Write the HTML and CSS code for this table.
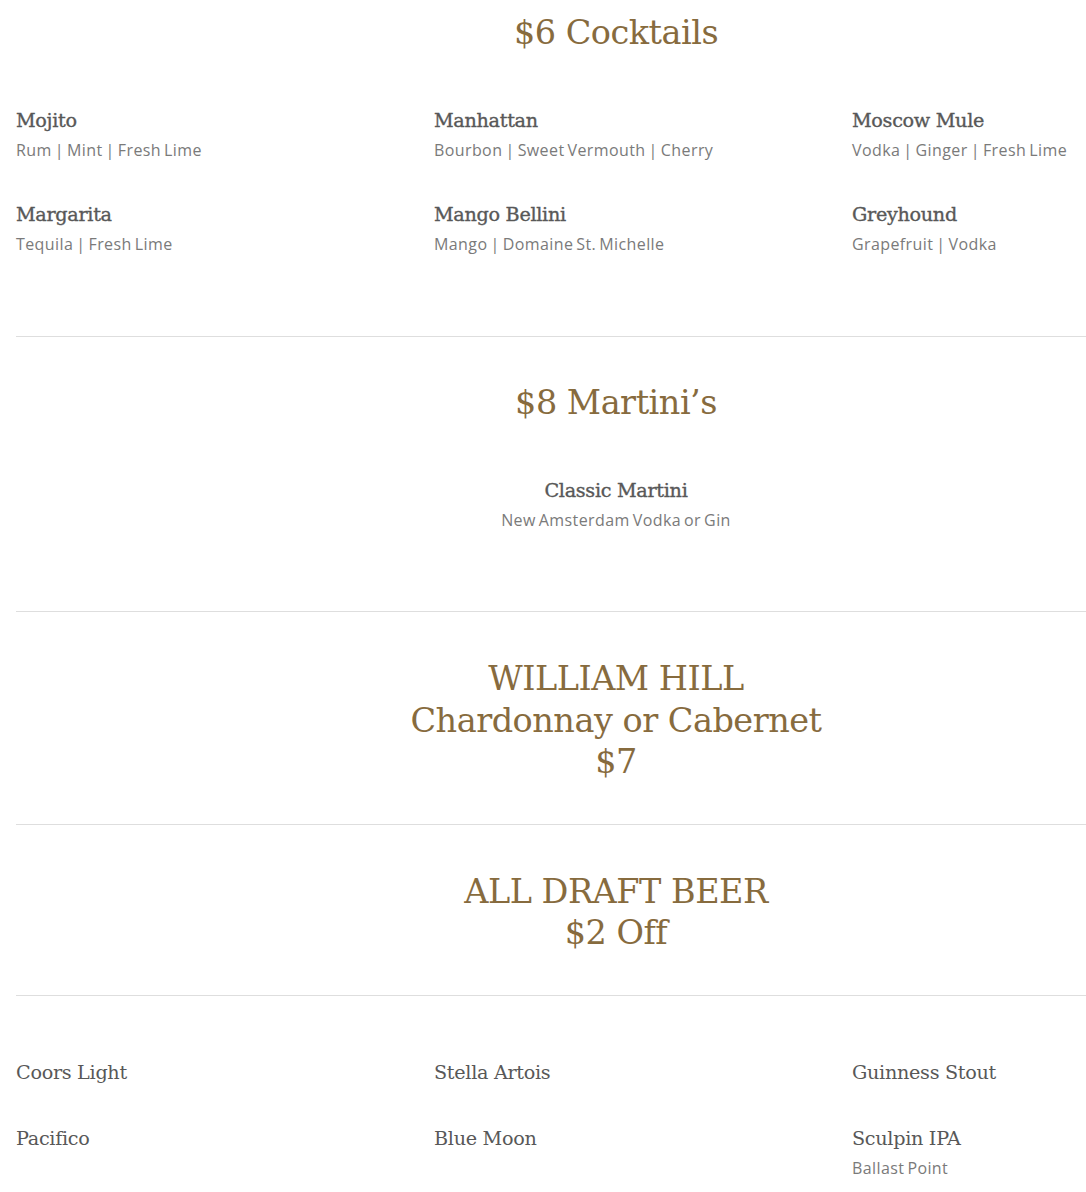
FILE: index.html
```html
<!DOCTYPE html>
<html lang="en">
<head>
<meta charset="utf-8">
<title>Happy Hour Menu</title>
<link rel="stylesheet" href="styles.css">
</head>
<body>
<div class="page">
<main class="menu">
  <section class="menu-section">
    <h2 class="section-title">$6 Cocktails</h2>
    <div class="item-grid">
      <div class="item"><h3 class="item-name strong">Mojito</h3><p class="item-desc">Rum | Mint | Fresh Lime</p></div>
      <div class="item"><h3 class="item-name strong">Manhattan</h3><p class="item-desc">Bourbon | Sweet Vermouth | Cherry</p></div>
      <div class="item"><h3 class="item-name strong">Moscow Mule</h3><p class="item-desc">Vodka | Ginger | Fresh Lime</p></div>
      <div class="item"><h3 class="item-name strong">Margarita</h3><p class="item-desc">Tequila | Fresh Lime</p></div>
      <div class="item"><h3 class="item-name strong">Mango Bellini</h3><p class="item-desc">Mango | Domaine St. Michelle</p></div>
      <div class="item"><h3 class="item-name strong">Greyhound</h3><p class="item-desc">Grapefruit | Vodka</p></div>
    </div>
  </section>

  <section class="menu-section">
    <h2 class="section-title">$8 Martini’s</h2>
    <div class="item-center">
      <div class="item"><h3 class="item-name strong">Classic Martini</h3><p class="item-desc">New Amsterdam Vodka or Gin</p></div>
    </div>
  </section>

  <section class="menu-section title-only">
    <h2 class="section-title">WILLIAM HILL<br>Chardonnay or Cabernet<br>$7</h2>
  </section>

  <section class="menu-section title-only">
    <h2 class="section-title">ALL DRAFT BEER<br>$2 Off</h2>
  </section>

  <section class="menu-section beers">
    <div class="item-grid">
      <div class="item"><h3 class="item-name">Coors Light</h3></div>
      <div class="item"><h3 class="item-name">Stella Artois</h3></div>
      <div class="item"><h3 class="item-name">Guinness Stout</h3></div>
      <div class="item"><h3 class="item-name">Pacifico</h3></div>
      <div class="item"><h3 class="item-name">Blue Moon</h3></div>
      <div class="item"><h3 class="item-name">Sculpin IPA</h3><p class="item-desc">Ballast Point</p></div>
    </div>
  </section>
</main>
</div>
</body>
</html>
```

FILE: styles.css
```css
body {
  margin: 0;
  background: #ffffff;
  font-family: "Open Sans", "Liberation Sans", sans-serif;
}
.page {
  width: 100%;
  overflow: hidden;
}
.menu {
  width: 1200px;
  margin-left: 16px;
}
.menu-section {
  padding: 45px 0 39px;
  border-bottom: 1px solid #dedede;
}
.menu-section:first-child {
  padding-top: 12px;
  padding-bottom: 40px;
}
.menu-section.title-only {
  padding-top: 46px;
  padding-bottom: 41px;
}
.menu-section.beers {
  padding-top: 64px;
  border-bottom: none;
}
.section-title {
  margin: 0 0 54px;
  font-family: "DejaVu Serif", serif;
  font-weight: normal;
  font-size: 33.5px;
  line-height: 42px;
  color: #876b3e;
  text-align: center;
  letter-spacing: -0.5px;
}
.title-only .section-title {
  margin-bottom: 0;
  line-height: 41.5px;
}
.item-grid {
  display: grid;
  grid-template-columns: repeat(3, 1fr);
  column-gap: 54px;
}
.item-center {
  display: flex;
  justify-content: center;
  text-align: center;
}
.item {
  margin-bottom: 40px;
}
.item-name {
  margin: 0;
  font-family: "DejaVu Serif", serif;
  font-weight: normal;
  font-size: 19.2px;
  line-height: 26px;
  color: #585858;
  letter-spacing: -0.3px;
}
.item-name.strong {
  -webkit-text-stroke: 0.35px #585858;
}
.item-desc {
  margin: 4px 0 0;
  font-size: 16px;
  line-height: 24px;
  color: #7a7a7a;
  letter-spacing: 0.4px;
  word-spacing: -1.5px;
}
```
